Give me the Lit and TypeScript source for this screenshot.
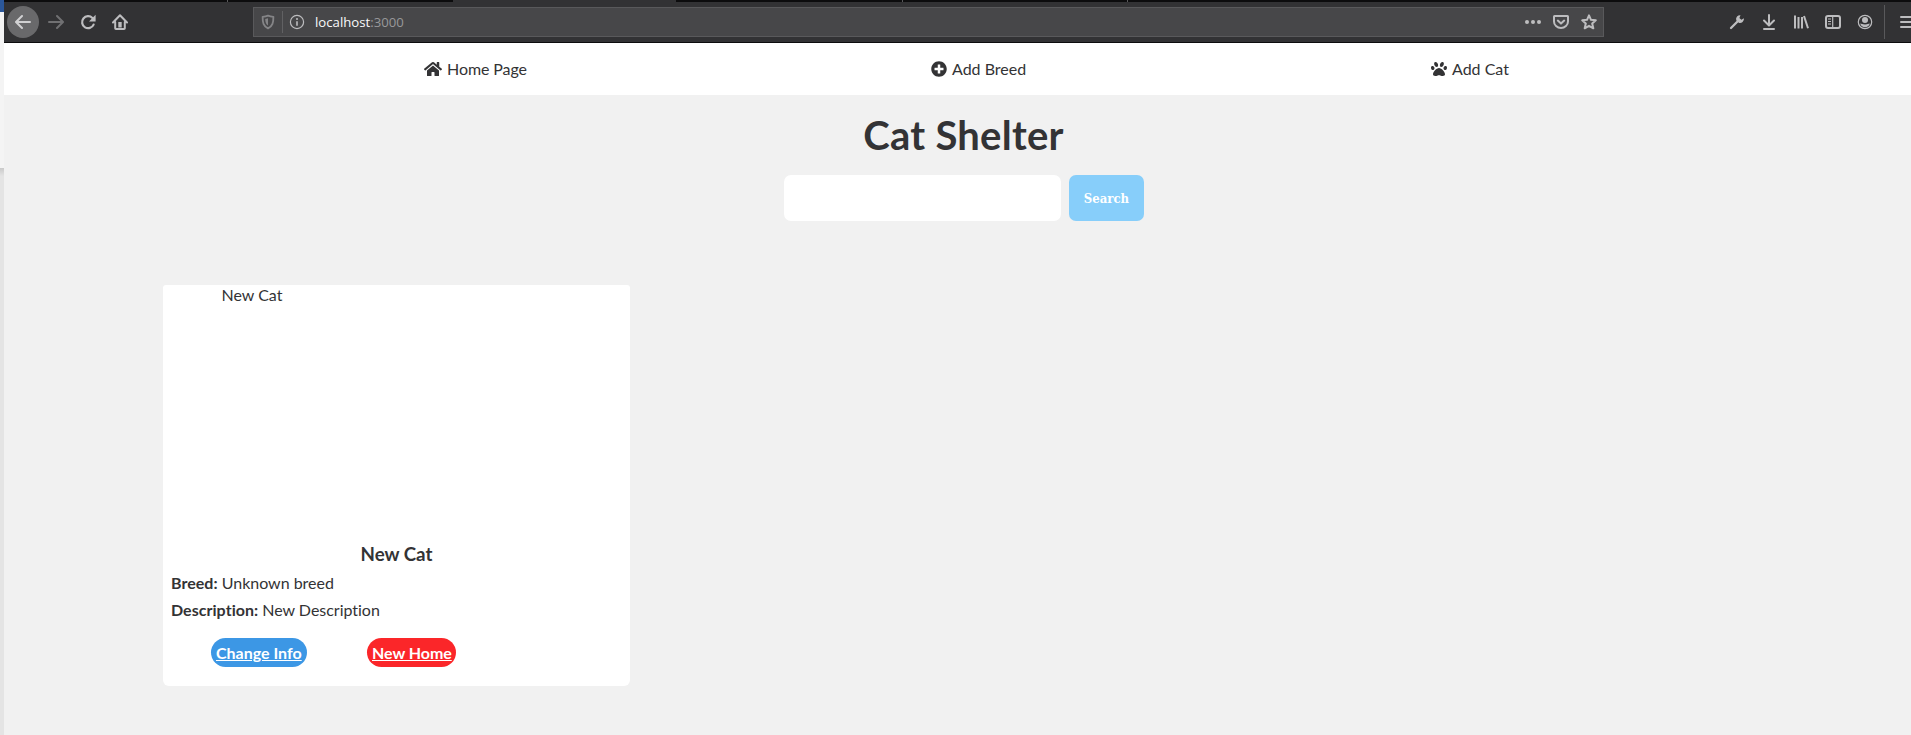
import { LitElement, html, css, svg } from "lit";
import { customElement } from "lit/decorators.js";

const line = (body: unknown) => svg`<g fill="none" stroke="currentColor" stroke-width="2" stroke-linecap="round" stroke-linejoin="round">${body}</g>`;

const toolbarIcons: Record<string, unknown> = {
  back: line(svg`<path d="M15 8H1.5M7 2L1 8l6 6"/>`),
  forward: line(svg`<path d="M1 8h13.5M9 2l6 6-6 6"/>`),
  reload: svg`<path d="M13.6 10.600A6 6 0 1 1 12.400 4" fill="none" stroke="currentColor" stroke-width="2.200" stroke-linecap="round"/><path d="M15.600 .8v6.600H9z" fill="currentColor"/>`,
  home: svg`<path d="M1 8.500L8 1.300l7 7.200M3.200 8v6.200c0 .5.3.8.8.8h8c.5 0 .8-.3.8-.8V8" fill="none" stroke="currentColor" stroke-width="2" stroke-linecap="round" stroke-linejoin="round"/><path d="M6.300 8h3.400v5.500H6.300z" fill="currentColor"/>`,
  shield: svg`<path d="M8 1.600c2 .9 3.700 1.100 5.400 1.200 0 5.600-.7 9.200-5.400 11.600C3.300 12 2.600 8.400 2.600 2.800 4.300 2.700 6 2.500 8 1.600z" fill="none" stroke="currentColor" stroke-width="1.800" stroke-linejoin="round"/><path d="M8 4.300v7.300c-2-1.300-2.700-3.500-2.800-6.700z" fill="currentColor"/>`,
  info: svg`<circle cx="8" cy="8" r="6.600" fill="none" stroke="currentColor" stroke-width="1.200"/><circle cx="8" cy="4.900" r="1" fill="currentColor"/><path d="M8 7.200v4.600" stroke="currentColor" stroke-width="1.600"/>`,
  dots: svg`<g fill="currentColor"><circle cx="2" cy="8" r="2"/><circle cx="8" cy="8" r="2"/><circle cx="14" cy="8" r="2"/></g>`,
  pocket: line(svg`<path d="M1.500 2h13c.3 0 .5.200.5.500V7.500a7 6.500 0 0 1-14 0v-5c0-.3.200-.5.500-.5z"/><path d="M4.800 6.600L8 9.600l3.200-3"/>`),
  star: line(svg`<path d="M8 1.400l2 4.400 4.800.5-3.600 3.200 1.100 4.800L8 11.800l-4.300 2.500 1.100-4.800L1.200 6.300 6 5.800z"/>`),
  wrench: svg`<path d="M2 14l7-7" stroke="currentColor" stroke-width="2.300" stroke-linecap="round"/><path d="M11.500 1.200A4 4 0 0 0 7.200 6.200l2.600 2.600A4 4 0 0 0 14.900 4.300l-2.500 1.500-2-1.700z" fill="currentColor"/>`,
  download: line(svg`<path d="M8 1v9.500M3 6.500l5 5 5-5M3 15h10"/>`),
  library: svg`<path d="M2 1.500v13M5.500 3v11.500M9 3v11.500M11 2l4 12.300" fill="none" stroke="currentColor" stroke-width="2"/>`,
  sidebar: svg`<rect x="1" y="2" width="14" height="12" rx="2" fill="none" stroke="currentColor" stroke-width="2"/><path d="M7.700 2v12M3 5h3M3 7.500h3M3 10h3" stroke="currentColor" stroke-width="1.200"/>`,
  account: svg`<circle cx="8" cy="8" r="6.700" fill="none" stroke="currentColor" stroke-width="1.200"/><circle cx="8" cy="6" r="3" fill="currentColor"/><path d="M3.200 9.500c1.500 0 2 1 4.800 1s3.300-1 4.800-1c-.6 2.500-2.600 3.800-4.800 3.800s-4.200-1.300-4.800-3.800z" fill="currentColor"/>`,
  menu: svg`<path d="M1 3h14M1 8h14M1 13h14" stroke="currentColor" stroke-width="2" stroke-linecap="round"/>`,
};

const icon = (name: string) => html`<svg class="icon ${name}" viewBox="0 0 16 16">${toolbarIcons[name]}</svg>`;

const houseIcon = html`<svg class="glyph wide" viewBox="0 0 576 512"><path d="M280.370 148.260L96 300.110V464a16 16 0 0 0 16 16l112.060-.290a16 16 0 0 0 15.920-16V368a16 16 0 0 1 16-16h64a16 16 0 0 1 16 16v95.640a16 16 0 0 0 16 16.050L464 480a16 16 0 0 0 16-16V300L295.670 148.260a12.190 12.190 0 0 0-15.300 0zM571.600 251.470L488 182.560V44.050a12 12 0 0 0-12-12h-56a12 12 0 0 0-12 12v72.610L318.470 43a48 48 0 0 0-61 0L4.340 251.470a12 12 0 0 0-1.600 16.900l25.500 31A12 12 0 0 0 45.150 301l235.220-193.740a12.190 12.190 0 0 1 15.300 0L530.900 301a12 12 0 0 0 16.900-1.600l25.500-31a12 12 0 0 0-1.700-16.930z"/></svg>`;
const plusIcon = html`<svg class="glyph" viewBox="0 0 512 512"><path d="M256 8C119 8 8 119 8 256s111 248 248 248 248-111 248-248S393 8 256 8zm144 276c0 6.600-5.400 12-12 12h-92v92c0 6.600-5.400 12-12 12h-56c-6.600 0-12-5.400-12-12v-92h-92c-6.600 0-12-5.400-12-12v-56c0-6.600 5.400-12 12-12h92v-92c0-6.600 5.400-12 12-12h56c6.600 0 12 5.400 12 12v92h92c6.600 0 12 5.400 12 12v56z"/></svg>`;
const pawIcon = html`<svg class="glyph" viewBox="0 0 512 512"><path d="M256 224c-79.410 0-192 122.760-192 200.250 0 34.900 26.810 55.750 71.740 55.750 48.840 0 81.090-25.080 120.260-25.080 39.510 0 71.850 25.080 120.260 25.080 44.930 0 71.740-20.850 71.740-55.750C448 346.760 335.410 224 256 224zm-147.280-12.610c-10.400-34.650-42.440-57.090-71.560-50.130-29.120 6.960-44.290 40.690-33.890 75.340 10.400 34.650 42.440 57.090 71.560 50.130 29.120-6.960 44.290-40.690 33.890-75.340zm84.720-20.780c30.940-8.140 42.930-49.410 26.780-92.190s-54.320-70.840-85.260-62.710c-30.940 8.140-42.930 49.410-26.780 92.190s54.330 70.840 85.260 62.710zm281.390-29.340c-29.120-6.960-61.150 15.480-71.560 50.130-10.400 34.650 4.770 68.380 33.890 75.340 29.120 6.960 61.150-15.480 71.560-50.130 10.400-34.650-4.770-68.380-33.890-75.340zm-156.270 29.340c30.940 8.140 69.110-19.930 85.260-62.710 16.150-42.770 4.160-84.050-26.780-92.190-30.940-8.140-69.110 19.930-85.260 62.710-16.150 42.780-4.160 84.050 26.780 92.190z"/></svg>`;

@customElement("browser-toolbar")
class BrowserToolbar extends LitElement {
  static styles = css`
    :host { display: block; height: 43px; background: #323234; color: #bdbdbf; }
    .tabs { display: grid; grid-template-columns: 224px 225px 223px 227px 225px 1fr; height: 2px; background: #0c0c0d; }
    .tick { border-right: 1px solid #59595b; }
    .active { background: #323234; }
    .bar { display: flex; align-items: center; height: 40px; border-bottom: 1px solid #0c0c0d; }
    .bar > * { flex: none; }
    .icon { display: block; flex: none; width: 16px; height: 16px; }
    .circle { display: grid; place-items: center; width: 32px; height: 32px; border-radius: 50%; background: #69696b; margin-left: 3px; color: #d0d0d2; }
    .forward { margin-left: 9px; color: #707072; }
    .reload { margin-left: 16px; }
    .home { margin-left: 16px; }
    .url { display: flex; align-items: center; box-sizing: border-box; width: 1351px; height: 30px; margin-left: 125px; padding: 0 6px; border: 1px solid #59595b; background: #474749; }
    .shield { color: #858587; }
    .divider { width: 1px; height: 22px; margin: 0 6px; background: #616163; }
    .address { flex: 1; margin-left: 10px; font: 13.2px "Open Sans", sans-serif; color: #98989a; }
    .host { color: #f9f9fa; }
    .url .pocket, .url .star { margin-left: 12px; }
    .tools { display: flex; gap: 16px; margin-left: 125px; }
    .sep { width: 1px; height: 34px; margin: 0 15px 0 11px; background: #59595b; }
  `;
  render() {
    return html`
      <div class="tabs"><i class="tick"></i><i></i><i class="active"></i><i class="tick"></i><i class="tick"></i><i></i></div>
      <div class="bar">
        <span class="circle">${icon("back")}</span>${icon("forward")}${icon("reload")}${icon("home")}
        <div class="url">${icon("shield")}<span class="divider"></span>${icon("info")}
          <span class="address"><span class="host">localhost</span>:3000</span>
          ${icon("dots")}${icon("pocket")}${icon("star")}</div>
        <div class="tools">${["wrench", "download", "library", "sidebar", "account"].map(icon)}</div>
        <span class="sep"></span>${icon("menu")}
      </div>`;
  }
}

@customElement("cat-card")
class CatCard extends LitElement {
  static styles = css`
    :host { display: block; box-sizing: border-box; width: 467px; height: 401px; background: #fff; border-radius: 3px 3px 6px 6px; }
    .photo { height: 250px; padding-left: 58.5px; line-height: 20px; }
    .name { margin: 7px 0 0; font-size: 18.72px; line-height: 24px; text-align: center; font-weight: 700; }
    .row { margin: 0 0 0 8px; line-height: 27px; letter-spacing: -0.02px; }
    .row b { letter-spacing: 0.04px; }
    .name + .row { margin-top: 3px; }
    .actions { display: flex; gap: 60px; margin: 15px 0 0 48px; }
    .pill { box-sizing: border-box; padding: 0 5px; height: 29px; line-height: 29px; border-radius: 15px; color: #fff; font-weight: 700; text-decoration: underline; }
    .edit { width: 96px; background: #3c97e5; }
    .adopt { width: 89px; white-space: nowrap; background: #fb2629; letter-spacing: -0.05px; }
  `;
  render() {
    return html`
      <div class="photo">New Cat</div>
      <h3 class="name">New Cat</h3>
      <p class="row"><b>Breed:</b> Unknown breed</p>
      <p class="row"><b>Description:</b> New Description</p>
      <div class="actions"><a class="pill edit">Change Info</a><a class="pill adopt">New Home</a></div>`;
  }
}

@customElement("app-root")
class AppRoot extends LitElement {
  static styles = css`
    :host { display: flex; height: 735px; overflow: hidden; background: #f1f1f1; color: #333335; font: 16px Lato, sans-serif; font-variant-ligatures: none; }
    .edge { display: flex; flex-direction: column; width: 4px; flex: none; background: #f4f4f4; }
    .blue { height: 12px; background: #2b579a; }
    .blank { height: 156px; }
    .gutter { flex: 1; background: linear-gradient(#c9c9c9, #e4e4e4 8px); }
    .window { flex: 1; min-width: 0; overflow: hidden; }
    .nav { display: flex; box-sizing: border-box; height: 52px; padding-left: 420px; background: #fff; }
    .link { display: flex; align-items: center; gap: 5px; height: 52px; }
    .link span { line-height: 18px; }
    .home { width: 507px; letter-spacing: -0.08px; }
    .breed { width: 500px; }
    .glyph { width: 16px; height: 16px; fill: currentColor; }
    .wide { width: 18px; }
    .main { display: flex; flex-direction: column; padding: 16px 0 0 159px; }
    .title { margin: 0 147px 0 0; line-height: 48px; font-size: 40px; letter-spacing: 0.25px; text-align: center; }
    .search { display: flex; gap: 8px; margin: 16px 0 0 621px; }
    .field { box-sizing: border-box; width: 277px; height: 46px; border: 0; border-radius: 7px; background: #fff; }
    .go { width: 75px; height: 46px; padding: 0; border: 0; border-radius: 7px; background: #87cefa; color: #fff; font: 700 13px "DejaVu Serif Condensed", "DejaVu Serif", serif; font-stretch: condensed; }
    .card { margin-top: 64px; }
  `;
  render() {
    return html`
      <div class="edge"><div class="blue"></div><div class="blank"></div><div class="gutter"></div></div>
      <div class="window">
        <browser-toolbar></browser-toolbar>
        <nav class="nav">
          <a class="link home">${houseIcon}<span>Home Page</span></a>
          <a class="link breed">${plusIcon}<span>Add Breed</span></a>
          <a class="link">${pawIcon}<span>Add Cat</span></a>
        </nav>
        <main class="main">
          <h1 class="title">Cat Shelter</h1>
          <form class="search"><input class="field" /><button class="go" type="button">Search</button></form>
          <cat-card class="card"></cat-card>
        </main>
      </div>`;
  }
}
